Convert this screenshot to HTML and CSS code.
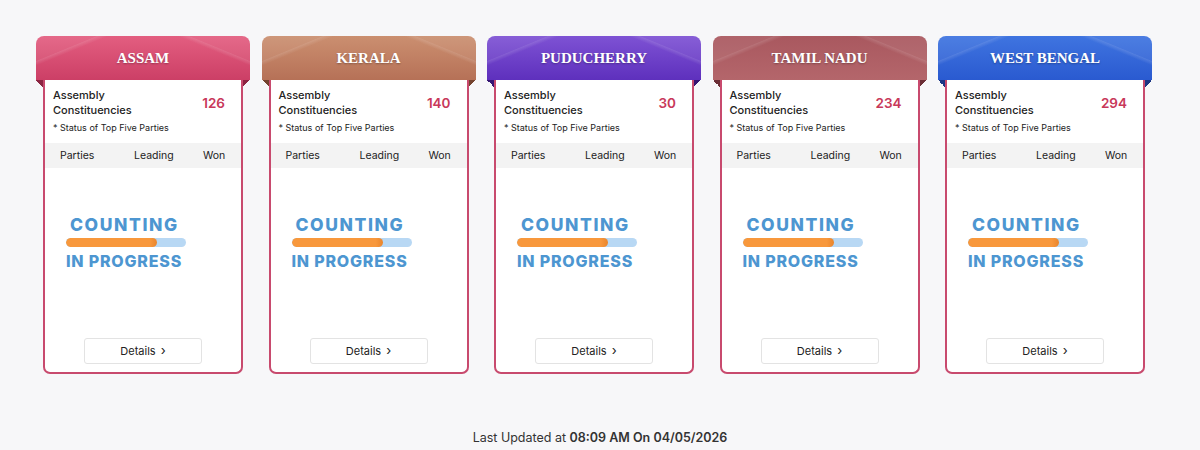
FILE: index.html
```html
<!DOCTYPE html>
<html lang="en">
<head>
  <meta charset="UTF-8"/>
  <title>Assembly Election Results</title>
  <link rel="stylesheet" href="styles.css">
</head>
<body>
  <div class="states">
    <div class="state-card">
      <div class="ribbon assam">ASSAM</div>
      <div class="card-body">
        <div class="seats">
          <div class="seats-label">Assembly<br>Constituencies</div>
          <div class="seats-count">126</div>
        </div>
        <div class="note">* Status of Top Five Parties</div>
        <div class="table-head"><span>Parties</span><span>Leading</span><span>Won</span></div>
        <div class="counting">
          <div class="counting-top">COUNTING</div>
          <div class="bar"><div class="bar-fill" style="width: 76%"></div></div>
          <div class="counting-bottom">IN PROGRESS</div>
        </div>
        <a class="details-btn" href="#">Details <span class="chev">&#8250;</span></a>
      </div>
    </div>
    <div class="state-card">
      <div class="ribbon kerala">KERALA</div>
      <div class="card-body">
        <div class="seats">
          <div class="seats-label">Assembly<br>Constituencies</div>
          <div class="seats-count">140</div>
        </div>
        <div class="note">* Status of Top Five Parties</div>
        <div class="table-head"><span>Parties</span><span>Leading</span><span>Won</span></div>
        <div class="counting">
          <div class="counting-top">COUNTING</div>
          <div class="bar"><div class="bar-fill" style="width: 76%"></div></div>
          <div class="counting-bottom">IN PROGRESS</div>
        </div>
        <a class="details-btn" href="#">Details <span class="chev">&#8250;</span></a>
      </div>
    </div>
    <div class="state-card">
      <div class="ribbon puducherry">PUDUCHERRY</div>
      <div class="card-body">
        <div class="seats">
          <div class="seats-label">Assembly<br>Constituencies</div>
          <div class="seats-count">30</div>
        </div>
        <div class="note">* Status of Top Five Parties</div>
        <div class="table-head"><span>Parties</span><span>Leading</span><span>Won</span></div>
        <div class="counting">
          <div class="counting-top">COUNTING</div>
          <div class="bar"><div class="bar-fill" style="width: 76%"></div></div>
          <div class="counting-bottom">IN PROGRESS</div>
        </div>
        <a class="details-btn" href="#">Details <span class="chev">&#8250;</span></a>
      </div>
    </div>
    <div class="state-card">
      <div class="ribbon tamilnadu">TAMIL NADU</div>
      <div class="card-body">
        <div class="seats">
          <div class="seats-label">Assembly<br>Constituencies</div>
          <div class="seats-count">234</div>
        </div>
        <div class="note">* Status of Top Five Parties</div>
        <div class="table-head"><span>Parties</span><span>Leading</span><span>Won</span></div>
        <div class="counting">
          <div class="counting-top">COUNTING</div>
          <div class="bar"><div class="bar-fill" style="width: 76%"></div></div>
          <div class="counting-bottom">IN PROGRESS</div>
        </div>
        <a class="details-btn" href="#">Details <span class="chev">&#8250;</span></a>
      </div>
    </div>
    <div class="state-card">
      <div class="ribbon westbengal">WEST BENGAL</div>
      <div class="card-body">
        <div class="seats">
          <div class="seats-label">Assembly<br>Constituencies</div>
          <div class="seats-count">294</div>
        </div>
        <div class="note">* Status of Top Five Parties</div>
        <div class="table-head"><span>Parties</span><span>Leading</span><span>Won</span></div>
        <div class="counting">
          <div class="counting-top">COUNTING</div>
          <div class="bar"><div class="bar-fill" style="width: 76%"></div></div>
          <div class="counting-bottom">IN PROGRESS</div>
        </div>
        <a class="details-btn" href="#">Details <span class="chev">&#8250;</span></a>
      </div>
    </div>
  </div>
  <div class="updated">Last Updated at <b>08:09 AM On 04/05/2026</b></div>
</body>
</html>
```

FILE: styles.css
```css
body {
  margin: 0;
  background: #f7f7f9;
  font-family: "Inter", "Noto Sans", sans-serif;
  color: #222;
}
.states {
  display: flex;
  gap: 25.5px;
  padding: 36px 0 0 43px;
}
.state-card {
  width: 200px;
  display: flex;
  flex-direction: column;
}

/* coloured ribbon that hangs over the card edges */
.ribbon {
  position: relative;
  margin: 0 -7px;
  height: 44px;
  border-radius: 8px 8px 0 0;
  display: flex;
  align-items: center;
  justify-content: center;
  font-family: "Liberation Serif", serif;
  font-weight: bold;
  font-size: 15px;
  color: #fff;
  text-shadow: 0 1px 2px rgba(0,0,0,0.3);
  background: linear-gradient(var(--top), var(--bottom));
}
.ribbon::before {
  content: "";
  position: absolute;
  inset: 0;
  border-radius: inherit;
  background:
    linear-gradient(to bottom right, rgba(255,255,255,0.07) 0 28%, rgba(255,255,255,0.14) 29%, transparent 34%) left top / 50% 100% no-repeat,
    linear-gradient(to bottom left, rgba(255,255,255,0.07) 0 28%, rgba(255,255,255,0.14) 29%, transparent 34%) right top / 50% 100% no-repeat;
}
.ribbon::after {
  content: "";
  position: absolute;
  left: 0;
  right: 0;
  top: 100%;
  height: 7px;
  background:
    linear-gradient(to top right, transparent 50%, var(--fold) 50%) left top / 7px 7px no-repeat,
    linear-gradient(to top left, transparent 50%, var(--fold) 50%) right top / 7px 7px no-repeat;
}
.assam      { --top: #e35e80; --bottom: #cc3f66; --fold: #8c2542; }
.kerala     { --top: #cb8f70; --bottom: #b67157; --fold: #74432f; }
.puducherry { --top: #7e52d4; --bottom: #5e30bd; --fold: #351673; }
.tamilnadu  { --top: #a9585f; --bottom: #b4666b; --fold: #6b2e36; }
.westbengal { --top: #3f74e0; --bottom: #2a5ad0; --fold: #1a3684; }

.card-body {
  height: 292px;
  border: 2px solid #c84a6e;
  border-top: none;
  border-radius: 0 0 7px 7px;
  background: #fff;
  display: flex;
  flex-direction: column;
}
.seats {
  display: flex;
  align-items: center;
  justify-content: space-between;
  padding: 8px 16px 0 8px;
}
.seats-label {
  font-size: 11px;
  line-height: 15px;
  font-weight: 500;
}
.seats-count {
  font-size: 13.5px;
  font-weight: 600;
  color: #c8385a;
}
.note {
  margin-top: 3px;
  padding-left: 8px;
  font-size: 9px;
  line-height: 14px;
}
.table-head {
  margin-top: 8px;
  height: 25px;
  background: #f3f3f3;
  display: grid;
  grid-template-columns: 74px 69px auto;
  align-items: center;
  padding-left: 15px;
  font-size: 10.5px;
}

/* counting in progress badge */
.counting {
  margin: 47px 0 0 21px;
  width: 120px;
  color: #4d96d1;
  font-weight: 800;
  white-space: nowrap;
}
.counting-top,
.counting-bottom {
  font-size: 17.5px;
  line-height: 20px;
}
.counting-top {
  padding-left: 4px;
  letter-spacing: 1.6px;
}
.counting-bottom {
  margin-top: 4px;
  padding-left: 0;
  font-size: 16px;
  letter-spacing: 0.8px;
}
.bar {
  margin-top: 3px;
  height: 9px;
  border-radius: 5px;
  background: #b8d8f4;
  overflow: hidden;
}
.bar-fill {
  height: 100%;
  border-radius: 5px;
  background: linear-gradient(to right, #f8983c 92%, #e9852c);
}

.details-btn {
  margin: auto auto 8px;
  width: 116px;
  height: 24px;
  border: 1px solid #e3e3e3;
  border-radius: 3px;
  display: flex;
  align-items: center;
  justify-content: center;
  gap: 5px;
  font-size: 11px;
  color: #222;
  text-decoration: none;
}
.chev {
  font-size: 13px;
  line-height: 1;
  margin-top: -2px;
}
.updated {
  margin-top: 56px;
  text-align: center;
  font-size: 12.5px;
  line-height: 16px;
  color: #333;
}
.updated b {
  font-weight: 600;
}
```
